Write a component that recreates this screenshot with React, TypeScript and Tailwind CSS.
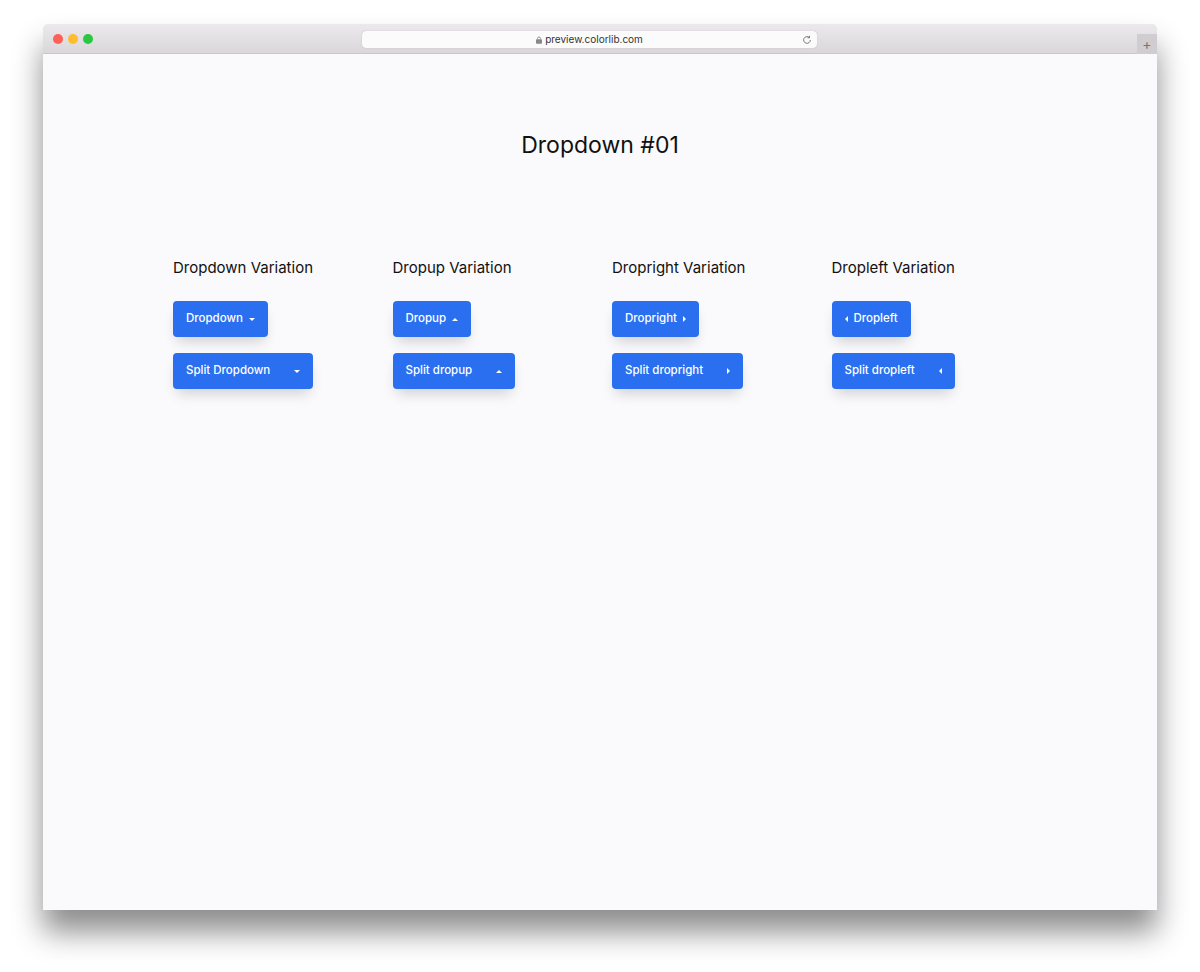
const FONT = { fontFamily: "Inter, 'Noto Sans', sans-serif" };

type Dir = "down" | "up" | "right" | "left";

function Caret({ dir }: { dir: Dir }) {
  const pts = {
    down: "0,0 8,0 4,4",
    up: "0,4 8,4 4,0",
    right: "0,0 4,4 0,8",
    left: "4,0 0,4 4,8",
  }[dir];
  const box = dir === "down" || dir === "up" ? "0 0 8 4" : "0 0 4 8";
  const cls = dir === "down" || dir === "up" ? "h-[3px] w-[6px]" : "h-[6px] w-[3px]";
  return (
    <svg viewBox={box} className={cls} fill="white">
      <polygon points={pts} />
    </svg>
  );
}

const btn =
  "flex h-[36px] items-center rounded-[4px] bg-[#2a6ff0] text-[11.5px] font-medium text-white shadow-[0_8px_14px_-4px_rgba(0,0,0,0.18)]";

function Column({
  title,
  label,
  split,
  dir,
}: {
  title: string;
  label: string;
  split: string;
  dir: Dir;
}) {
  return (
    <div className="flex flex-col items-start">
      <h3 className="mb-[22px] text-[15px] leading-[22px] text-[#111]">{title}</h3>
      <button type="button" className={`${btn} gap-[6px] px-[13px]`}>
        {dir === "left" && <Caret dir={dir} />}
        <span>{label}</span>
        {dir !== "left" && <Caret dir={dir} />}
      </button>
      <div className={`${btn} mt-[16px]`}>
        <span className="pl-[13px] pr-[12px]">{split}</span>
        <span className="flex h-full items-center pl-[12px] pr-[13px]">
          <Caret dir={dir} />
        </span>
      </div>
    </div>
  );
}

export default function App() {
  return (
    <div className="min-h-[972px] w-full bg-white pt-[24px]" style={FONT}>
      <div className="mx-auto w-[1114px] overflow-hidden rounded-t-[5px] bg-[#faf9fc] shadow-[0_22px_30px_rgba(0,0,0,0.45)]">
        <div className="relative flex h-[30px] items-center border-b border-[#c9c7c9] bg-gradient-to-b from-[#ebe9eb] to-[#d9d7d9]">
          <div className="ml-[10px] flex gap-[5px]">
            <span className="h-[10px] w-[10px] rounded-full bg-[#fe5f57]" />
            <span className="h-[10px] w-[10px] rounded-full bg-[#febc2e]" />
            <span className="h-[10px] w-[10px] rounded-full bg-[#29c840]" />
          </div>
          <div className="absolute left-[319px] top-[7px] flex h-[17px] w-[455px] items-center justify-center rounded-[4px] bg-[#fbfbfb] shadow-[0_0_1px_rgba(0,0,0,0.3)]">
            <svg viewBox="0 0 8 10" className="mr-[3px] h-[8px] w-[6px]" fill="#888">
              <rect x="0" y="4" width="8" height="6" rx="1" />
              <path d="M2 4V3a2 2 0 0 1 4 0v1" stroke="#888" strokeWidth="1.2" fill="none" />
            </svg>
            <span className="text-[10px] text-[#333]">preview.colorlib.com</span>
            <svg viewBox="0 0 12 12" className="absolute right-[5px] h-[10px] w-[10px]" fill="none" stroke="#777" strokeWidth="1.2">
              <path d="M10 6a4 4 0 1 1-1.2-2.9" />
              <path d="M9 1v2.3H6.7" />
            </svg>
          </div>
          <div className="absolute right-0 top-[10px] flex h-[20px] w-[20px] items-center justify-center bg-[#cfcdcf] text-[14px] leading-none text-[#777]">
            +
          </div>
        </div>
        <div className="h-[856px]">
          <h1 className="pt-[76px] text-center text-[23px] leading-[30px] text-[#111]">Dropdown #01</h1>
          <div className="ml-[130px] mt-[97px] grid grid-cols-[219.5px_219.5px_219.5px_219.5px]">
            <Column title="Dropdown Variation" label="Dropdown" split="Split Dropdown" dir="down" />
            <Column title="Dropup Variation" label="Dropup" split="Split dropup" dir="up" />
            <Column title="Dropright Variation" label="Dropright" split="Split dropright" dir="right" />
            <Column title="Dropleft Variation" label="Dropleft" split="Split dropleft" dir="left" />
          </div>
        </div>
      </div>
    </div>
  );
}
